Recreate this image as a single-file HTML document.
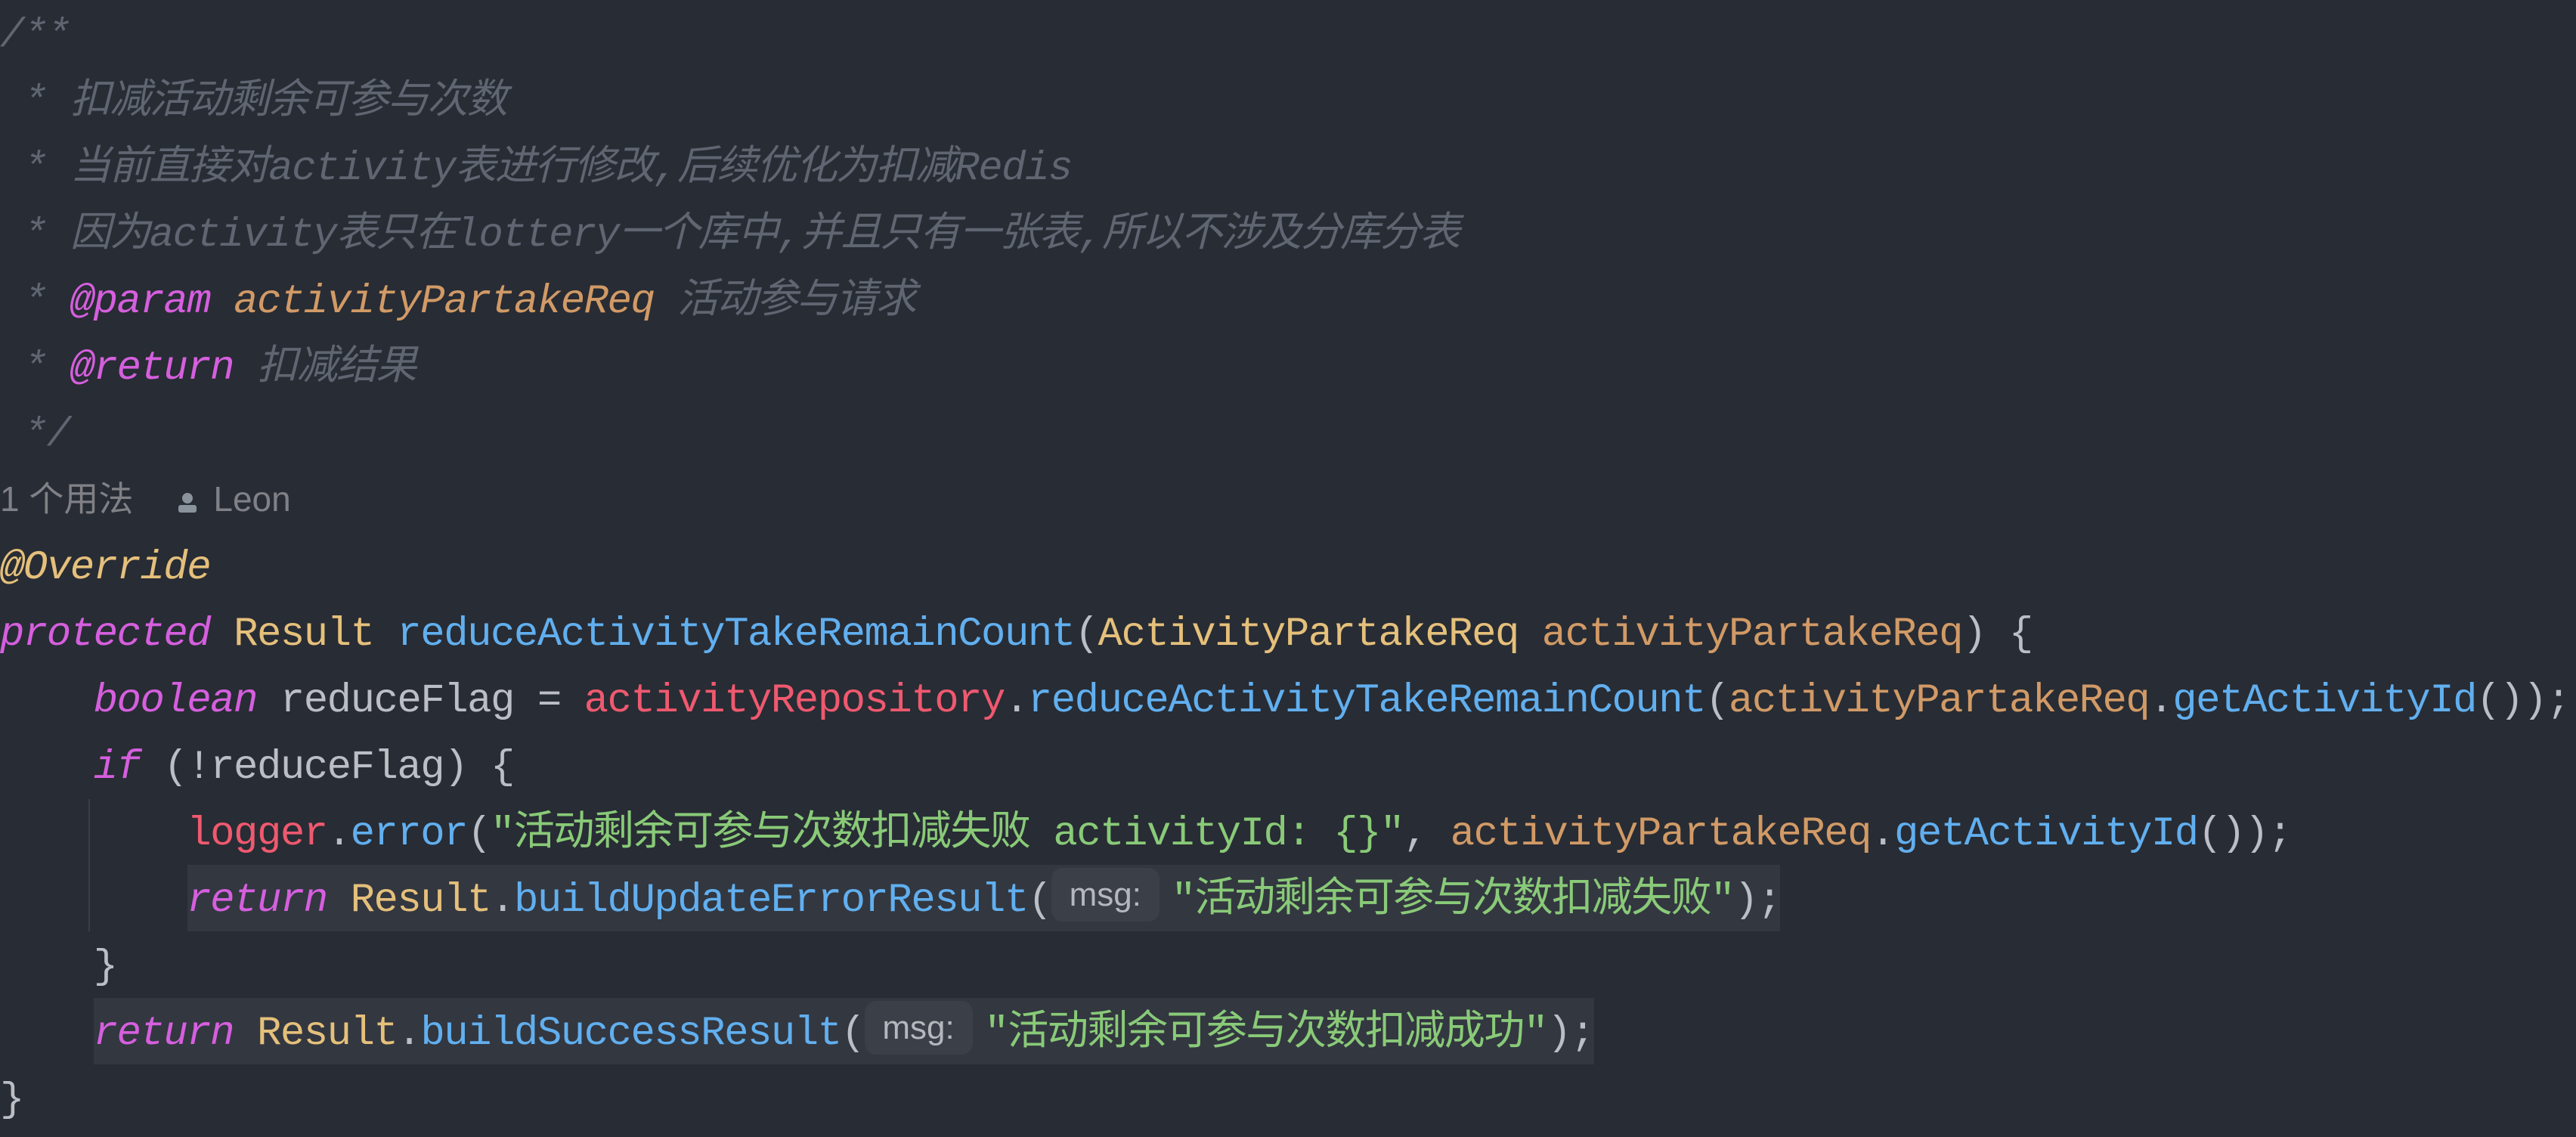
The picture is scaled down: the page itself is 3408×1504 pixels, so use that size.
<!DOCTYPE html>
<html><head><meta charset="utf-8"><style>
html,body{margin:0;padding:0;background:#282c34;width:3408px;height:1496px;overflow:hidden}
.l{position:absolute;left:0;height:88px;line-height:96px;white-space:pre;font-family:"Liberation Mono","Noto Sans CJK SC",monospace;font-size:54px;letter-spacing:-1.5px;color:#bbbec4}
.cm{color:#5f6571;font-style:italic}
.kw{color:#d55fde;font-style:italic}
.ty{color:#e5c07b}
.fn{color:#61afef}
.fd{color:#ef596f}
.pa{color:#d19a66}
.st{color:#89ca78}
.an{color:#e5c07b;font-style:italic}
.tg{color:#d55fde;font-style:italic}
.pill{display:inline-block;width:143px;height:71px;line-height:71px;border-radius:15px;background:#3b3f48;color:#b4b7bc;font-family:"Liberation Sans",sans-serif;font-size:44px;letter-spacing:0;text-align:center;vertical-align:middle;margin-right:16px;position:relative;top:-7px}
.box{position:absolute;background:#333740}
</style></head><body>
<div class="box" style="left:248px;top:1144px;width:2107px;height:88px"></div>
<div class="box" style="left:124px;top:1320px;width:1985px;height:88px"></div>
<div style="position:absolute;left:117px;top:1057px;width:2px;height:175px;background:#3a3e46"></div>

<div class="l cm" style="top:0">/**</div>
<div class="l cm" style="top:88px"> * 扣减活动剩余可参与次数</div>
<div class="l cm" style="top:176px"> * 当前直接对activity表进行修改,后续优化为扣减Redis</div>
<div class="l cm" style="top:264px"> * 因为activity表只在lottery一个库中,并且只有一张表,所以不涉及分库分表</div>
<div class="l cm" style="top:352px"> * <span class="tg">@param</span> <span class="pa">activityPartakeReq</span> 活动参与请求</div>
<div class="l cm" style="top:440px"> * <span class="tg">@return</span> 扣减结果</div>
<div class="l cm" style="top:528px"> */</div>
<div class="l" style="top:616px;line-height:88px;letter-spacing:0;font-family:'Liberation Sans','Noto Sans CJK SC',sans-serif;font-size:46px;color:#7f8186">1 个用法<span style="display:inline-block;width:56px"></span><svg width="32" height="28" viewBox="0 0 32 28" style="vertical-align:-3px;margin-right:18px"><circle cx="16" cy="8" r="7" fill="#8a939c"/><rect x="4" y="17" width="24" height="10" rx="3" fill="#8a939c"/></svg>Leon</div>
<div class="l an" style="top:704px">@Override</div>
<div class="l" style="top:792px"><span class="kw">protected</span> <span class="ty">Result</span> <span class="fn">reduceActivityTakeRemainCount</span>(<span class="ty">ActivityPartakeReq</span> <span class="pa">activityPartakeReq</span>) {</div>
<div class="l" style="top:880px">    <span class="kw">boolean</span> reduceFlag = <span class="fd">activityRepository</span>.<span class="fn">reduceActivityTakeRemainCount</span>(<span class="pa">activityPartakeReq</span>.<span class="fn">getActivityId</span>());</div>
<div class="l" style="top:968px">    <span class="kw">if</span> (!reduceFlag) {</div>
<div class="l" style="top:1056px">        <span class="fd">logger</span>.<span class="fn">error</span>(<span class="st">"活动剩余可参与次数扣减失败 activityId: {}"</span>, <span class="pa">activityPartakeReq</span>.<span class="fn">getActivityId</span>());</div>
<div class="l" style="top:1144px">        <span class="kw">return</span> <span class="ty">Result</span>.<span class="fn">buildUpdateErrorResult</span>(<span class="pill">msg:</span><span class="st">"活动剩余可参与次数扣减失败"</span>);</div>
<div class="l" style="top:1232px">    }</div>
<div class="l" style="top:1320px">    <span class="kw">return</span> <span class="ty">Result</span>.<span class="fn">buildSuccessResult</span>(<span class="pill">msg:</span><span class="st">"活动剩余可参与次数扣减成功"</span>);</div>
<div class="l" style="top:1408px">}</div>
</body></html>
